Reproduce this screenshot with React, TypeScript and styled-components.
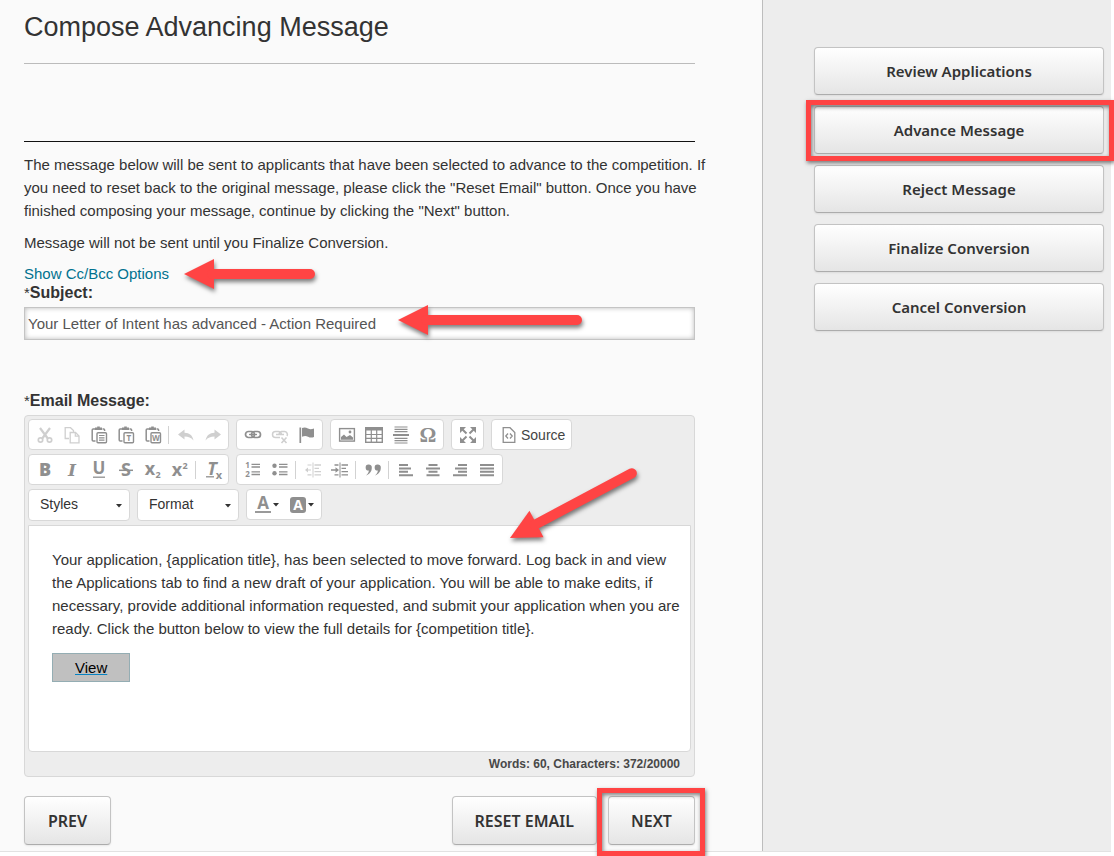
import React from 'react';
import styled, { createGlobalStyle, css } from 'styled-components';

const GlobalStyle = createGlobalStyle`
  * { box-sizing: border-box; }
  body {
    min-height: 100vh;
    margin: 0;
    background: #fff;
    color: #333;
    font-family: "Liberation Sans", Arial, sans-serif;
    font-size: 15px;
    line-height: 23px;
  }
`;

const RED = '#ff4444';

const Page = styled.div`
  display: grid;
  grid-template-columns: minmax(0, 1fr) 349px;
  margin-right: 3px;
  border-bottom: 1px solid #e2e2e2;
`;

const Main = styled.main`
  padding: 9px 67px 6px 24px;
  background: #fafafa;
`;

const Title = styled.h1`
  margin: 0;
  padding: 0 0 18px;
  border-bottom: 1px solid #bbb;
  font-size: 27px;
  font-weight: 400;
  line-height: 36px;
`;

const Intro = styled.section`
  margin-top: 77px;
  padding-top: 11px;
  border-top: 1px solid #111;
`;

const Text = styled.p`
  margin: 0 -16px 9px 0;
`;

const LinkRow = styled.div`
  position: relative;
  margin-top: 10px;
  line-height: 19px;
`;

const OptionsLink = styled.a`
  color: #00728f;
  text-decoration: none;
`;

const Label = styled.label`
  display: block;
  font-size: 16px;
  font-weight: 700;
  line-height: 19px;
`;

const Required = styled.span`
  font-size: 15px;
  font-weight: 400;
`;

const InputWrap = styled.div`
  position: relative;
  margin: 5px 0 51px;
`;

const SubjectInput = styled.input`
  display: block;
  width: 100%;
  height: 33px;
  padding: 0 3px;
  border: 1px solid #c4c4c4;
  border-radius: 0;
  background: #fff;
  box-shadow: inset 0 0 5px rgba(0, 0, 0, 0.28);
  color: #555;
  font: inherit;
`;

const Editor = styled.div`
  position: relative;
  margin-top: 5px;
  padding: 3px 3px 0;
  border: 1px solid #d8d8d8;
  border-radius: 4px;
  background: #ededed;
`;

const Toolbar = styled.div`
  display: flex;
  flex-direction: column;
  gap: 4px;
  margin-bottom: 4px;
`;

const ToolRow = styled.div`
  display: flex;
  gap: 7px;
`;

const Group = styled.div`
  display: flex;
  align-items: center;
  height: 31px;
  padding: 0 2px;
  border: 1px solid #d8d8d8;
  border-radius: 4px;
  background: #fff;
`;

const ToolButton = styled.button<{ $wide?: boolean }>`
  display: flex;
  align-items: center;
  justify-content: center;
  gap: 3px;
  width: ${(p) => (p.$wide ? 'auto' : '27px')};
  height: 27px;
  padding: ${(p) => (p.$wide ? '0 4px 0 6px' : '0')};
  border: 0;
  background: none;
  color: ${(p) => (p.$wide ? '#444' : '#8f8f8f')};
  font: 14px "Liberation Sans", Arial, sans-serif;
  &:disabled { color: #cfcfcf; }
  svg { color: ${(p) => (p.$wide ? '#8f8f8f' : 'inherit')}; }
`;

const ColorButton = styled(ToolButton)`
  gap: 1px;
  width: 35px;
`;

const IconSvg = styled.svg`
  flex: none;
  overflow: visible;
`;

const Separator = styled.span`
  width: 1px;
  height: 18px;
  margin: 0 3px 0 2px;
  background: #d2d2d2;
`;

const Combo = styled.span`
  position: relative;
  width: 102px;
  height: 32px;
`;

const ComboSelect = styled.select`
  width: 100%;
  height: 100%;
  padding: 0 24px 2px 11px;
  border: 1px solid #d8d8d8;
  border-radius: 4px;
  appearance: none;
  background: #fff;
  color: #333;
  font: 14px "Liberation Sans", Arial, sans-serif;
`;

const ComboCaret = styled.span`
  position: absolute;
  top: 15px;
  right: 8px;
  display: flex;
  pointer-events: none;
`;

const Body = styled.div`
  min-height: 227px;
  padding: 22px 5px 22px 22px;
  border: 1px solid #d8d8d8;
  border-radius: 0 0 4px 4px;
  background: #fff;
  outline: 0;
`;

const Message = styled.p`
  margin: 0 0 13px 1px;
`;

const ViewLink = styled.a`
  display: inline-block;
  margin-left: 1px;
  padding: 2px 22px;
  border: 1px solid #94adb3;
  background: #c0c0c0;
  color: #000;
  text-decoration: underline 1px #0782c1;
`;

const Counter = styled.div`
  padding-right: 11px;
  color: #484848;
  font-size: 12px;
  font-weight: 700;
  line-height: 24px;
  text-align: right;
`;

const Footer = styled.div`
  display: flex;
  justify-content: space-between;
  margin-top: 19px;
`;

const FooterGroup = styled.div`
  display: flex;
  gap: 11px;
`;

const Anchor = styled.div`
  position: relative;
`;

const Button = styled.button<{ $block?: boolean }>`
  display: block;
  min-width: 87px;
  height: 49px;
  padding: 0 22px;
  border: 1px solid #c3c3c3;
  border-bottom-color: #acacac;
  border-radius: 4px;
  background: linear-gradient(#fff, #e5e5e5);
  box-shadow: 0 1px 2px rgba(0, 0, 0, 0.08);
  color: #333;
  font: 600 16px "Noto Sans", sans-serif;
  white-space: nowrap;
  ${(p) => p.$block && css`
    width: 100%;
    height: 48px;
    font-size: 15px;
  `}
`;

const Sidebar = styled.aside`
  display: flex;
  flex-direction: column;
  gap: 11px;
  padding: 47px 7px 0 51px;
  border-left: 1px solid #bdbdbd;
  background: #ededed;
`;

const Highlight = styled.span<{ $inset: string }>`
  position: absolute;
  z-index: 2;
  inset: ${(p) => p.$inset};
  border: 5px solid ${RED};
  box-shadow: 1px 2px 4px rgba(0, 0, 0, 0.5), inset 1px 2px 4px rgba(0, 0, 0, 0.5);
  pointer-events: none;
`;

const ArrowSvg = styled.svg<{ $left: number; $top: number }>`
  position: absolute;
  z-index: 3;
  left: ${(p) => p.$left}px;
  top: ${(p) => p.$top}px;
  overflow: visible;
  pointer-events: none;
  filter: drop-shadow(1px 3px 2px rgba(0, 0, 0, 0.5));
`;

/* The tip of the arrow is at (left, top); it points left before the turn. */
function Arrow({ left, top, length, turn = 0 }: { left: number; top: number; length: number; turn?: number }) {
  return (
    <ArrowSvg $left={left} $top={top} width="1" height="1" aria-hidden="true">
      <g transform={`rotate(${turn})`} fill={RED}>
        <path d="M0 0 30-15V15Z" />
        <path d={`M28 0H${length - 5}`} stroke={RED} strokeWidth="10" strokeLinecap="round" />
      </g>
    </ArrowSvg>
  );
}

const Caret = () => (
  <svg width="6" height="4" viewBox="0 0 6 4" aria-hidden="true"><path d="M0 0h6L3 3.5z" fill="#333" /></svg>
);

const glyph = (text: string, extra: React.SVGProps<SVGTextElement> = {}) => (
  <text x="9" y="15" textAnchor="middle" fontFamily="Open Sans, sans-serif" fontWeight="700" fontSize="17" fill="currentColor" {...extra}>{text}</text>
);

const line = (d: string, w = 1.6) => <path d={d} fill="none" stroke="currentColor" strokeWidth={w} />;

const clipboard = (
  <>
    <path d="M5.500 3H3.200Q2.200 3 2.200 4V14Q2.200 15 3.200 15H5.500M12.500 3H13.600Q14.600 3 14.600 4V5" fill="none" stroke="currentColor" strokeWidth="1.500" />
    <path d="M5 1.500h2.200V.5h2.600v1H12V4H5z" fill="currentColor" />
    <rect x="7" y="6.800" width="9.500" height="10" rx="1" fill="#fff" stroke="currentColor" strokeWidth="1.400" />
  </>
);

const tiny = (text: string) => glyph(text, { x: 11.8, y: 14.8, fontSize: 8 });

const icons: Record<string, React.ReactNode> = {
  Cut: (
    <>
      {line('M4 2 11.800 12.500M14 2 6.200 12.500', 2.2)}
      <circle cx="4.500" cy="14" r="2.200" fill="none" stroke="currentColor" strokeWidth="1.700" />
      <circle cx="13.500" cy="14" r="2.200" fill="none" stroke="currentColor" strokeWidth="1.700" />
    </>
  ),
  Copy: (
    <>
      {line('M6 12.500H2.200V1.700H7.500L10.500 4.500V6', 1.3)}
      <path d="M7.200 6.500H12.500L16 10V16.800H7.200Z" fill="#fff" stroke="currentColor" strokeWidth="1.300" />
      {line('M12.300 6.500V10.200H16', 1.2)}
    </>
  ),
  Paste: <>{clipboard}{line('M9 9.500h5.500M9 11.800h5.500M9 14.100h5.500', 1.2)}</>,
  'Paste as plain text': <>{clipboard}{tiny('T')}</>,
  'Paste from Word': <>{clipboard}{tiny('W')}</>,
  Undo: <path d="M1 8.500 7.500 3.500V6.800C12.500 7 15.500 9.500 16.500 14.500 14 11.500 11.500 10.500 7.500 10.500V13.500Z" fill="currentColor" />,
  Redo: <path d="M17 8.500 10.500 3.500V6.800C5.500 7 2.500 9.500 1.500 14.500 4 11.500 6.500 10.500 10.500 10.500V13.500Z" fill="currentColor" />,
  Link: (
    <>
      <rect x="1.500" y="5.500" width="9" height="6" rx="3" fill="none" stroke="currentColor" strokeWidth="1.700" />
      <rect x="7.500" y="5.500" width="9" height="6" rx="3" fill="none" stroke="currentColor" strokeWidth="1.700" />
      {line('M5 8.500h8', 1.3)}
    </>
  ),
  Unlink: (
    <>
      {line('M9 11.500H4.500A3 3 0 0 1 4.500 5.500H7.500A3 3 0 0 1 10.400 8M8 8A3 3 0 0 1 10.500 5.500H13.500A3 3 0 0 1 16 10M5 8.500h8', 1.5)}
      {line('M10.500 11.500 15.500 17M15.500 11.500 10.500 17', 1.6)}
    </>
  ),
  Anchor: (
    <>
      {line('M2.300 1.500V17', 1.7)}
      <path d="M4 2C6.500 1 8 1.500 10 2.600S13.500 3.500 16 2.500V11C13.500 12 12 11.700 10 10.700S6.500 9.700 4 10.800Z" fill="currentColor" />
    </>
  ),
  Image: (
    <>
      <rect x="1.600" y="2.600" width="14.800" height="12.500" fill="none" stroke="currentColor" strokeWidth="1.400" />
      <path d="M3 13.700V11L6 8.500 8.500 11 12 9 15 11.500V13.700Z" fill="currentColor" />
      <circle cx="12" cy="6" r="1.400" fill="currentColor" />
    </>
  ),
  Table: (
    <>
      <rect x="0.700" y="1.700" width="16.600" height="14.600" fill="none" stroke="currentColor" strokeWidth="1.400" />
      <path d="M0 1h18v3.500H0z" fill="currentColor" />
      {line('M0 8.500h18M0 12.300h18M6.300 4V16M11.700 4V16', 1.2)}
    </>
  ),
  'Horizontal line': <>{line('M2.500 1h13M2.500 3.300h13M2.500 5.600h13M2.500 12.400h13M2.500 14.700h13M2.500 17h13', 1.2)}{line('M1 9h16', 2)}</>,
  'Special character': glyph('Ω', { y: 16, fontSize: 21, fontFamily: 'Liberation Serif, serif' }),
  Maximize: (
    <>
      <path d="M1 1h6L1 7zM17 1v6l-6-6zM1 17v-6l6 6zM17 17h-6l6-6z" fill="currentColor" />
      {line('M3 3 7.500 7.500M15 3 10.500 7.500M3 15 7.500 10.500M15 15 10.500 10.500', 2)}
    </>
  ),
  Bold: glyph('B', { fontSize: 18, fontWeight: 800 }),
  Italic: glyph('I', { fontFamily: 'DejaVu Serif, serif', fontStyle: 'italic', fontSize: 17 }),
  Underline: <>{glyph('U', { y: 13, fontSize: 17 })}{line('M3 16.200h12', 1.3)}</>,
  Strikethrough: <>{glyph('S', { fontSize: 18 })}{line('M2 9.300h14', 1.5)}</>,
  Subscript: <>{glyph('x', { x: 6, y: 14, fontSize: 18 })}{glyph('2', { x: 14, y: 17, fontSize: 9 })}</>,
  Superscript: <>{glyph('x', { x: 6, y: 15, fontSize: 18 })}{glyph('2', { x: 14, y: 8, fontSize: 9 })}</>,
  'Remove format': <>{glyph('T', { x: 8, y: 14, fontStyle: 'italic', fontSize: 18 })}{line('M2 15.800h8', 1.3)}{glyph('x', { x: 15, y: 17.5, fontSize: 11 })}</>,
  'Numbered list': <>{glyph('1', { x: 3.5, y: 7, fontSize: 8 })}{glyph('2', { x: 3.5, y: 16, fontSize: 8 })}{line('M7.500 3.300h8.500M7.500 6h8.500M7.500 10.800h8.500M7.500 13.500h8.500', 1.3)}</>,
  'Bulleted list': (
    <>
      <circle cx="3.500" cy="4.700" r="2.200" fill="currentColor" /><circle cx="3.500" cy="12.200" r="2.200" fill="currentColor" />
      {line('M8 3.300h8.500M8 6h8.500M8 10.800h8.500M8 13.500h8.500', 1.3)}
    </>
  ),
  Outdent: <>{line('M9 1.500V16.500', 1)}{line('M10.500 4h6.500M10.500 7.300h4.500M10.500 10.600h6.500M10.500 13.900h6.500', 1.3)}{line('M3 9h4M3.500 4h4M3.500 13.900h4', 1.1)}<path d="M1 9l3-2.500v5z" fill="currentColor" /></>,
  Indent: <>{line('M9 1.500V16.500', 1)}{line('M10.500 4h6.500M10.500 7.300h4.500M10.500 10.600h6.500M10.500 13.900h6.500', 1.3)}{line('M0 9h5M3.500 4h4M3.500 13.900h4', 1.3)}<path d="M8 9l-3.500-2.800v5.600z" fill="currentColor" /></>,
  'Block quote': (
    <path d="M4.500 3.500A3 3 0 0 1 7.800 6.800C7.800 10.500 5.500 13.500 2 14.500 4 12.500 4.800 11.500 4.800 9.500A3 3 0 0 1 4.500 3.500ZM13.500 3.500A3 3 0 0 1 16.800 6.800C16.800 10.500 14.500 13.500 11 14.500 13 12.500 13.800 11.500 13.800 9.500A3 3 0 0 1 13.500 3.500Z" fill="currentColor" />
  ),
  'Align left': line('M2 4h9M2 7.400h12M2 10.800h9M2 14.200h14', 2),
  Center: line('M4.500 4h9M2 7.400h14M4.500 10.800h9M2.500 14.200h13', 2),
  'Align right': line('M7 4h9M4 7.400h12M7 10.800h9M2 14.200h14', 2),
  Justify: line('M2 4h14M2 7.400h14M2 10.800h14M2 14.200h14', 2),
  Source: (
    <>
      <path d="M3.200 1.700H10L14.800 6.500V16.300H3.200Z" fill="none" stroke="currentColor" strokeWidth="1.300" />
      {line('M8 7.500 5.800 10 8 12.500M10 7.500 12.200 10 10 12.500', 1.3)}
    </>
  ),
  'Text color': <>{glyph('A', { y: 12.5, fontSize: 17 })}{line('M1 16h16', 1.8)}</>,
  'Background color': (
    <>
      <rect x="1" y="1" width="16" height="16" rx="3" fill="currentColor" />
      {glyph('A', { y: 14, fontSize: 14, fill: '#fff' })}
    </>
  ),
};

const Icon = ({ name }: { name: string }) => (
  <IconSvg width="18" height="18" viewBox="0 0 18 18" aria-hidden="true">{icons[name]}</IconSvg>
);

/* A "|" in a list stands for a separator; a leading "-" marks a disabled tool. */
function ToolGroup({ tools }: { tools: string[] }) {
  return (
    <Group>
      {tools.map((tool, i) => {
        if (tool === '|') return <Separator key={i} />;
        const disabled = tool.startsWith('-');
        const name = disabled ? tool.slice(1) : tool;
        return (
          <ToolButton key={i} type="button" disabled={disabled} aria-label={name}>
            <Icon name={name} />
          </ToolButton>
        );
      })}
    </Group>
  );
}

function ToolCombo({ name }: { name: string }) {
  return (
    <Combo>
      <ComboSelect aria-label={name}><option>{name}</option></ComboSelect>
      <ComboCaret><Caret /></ComboCaret>
    </Combo>
  );
}

const message =
  'Your application, {application title}, has been selected to move forward. Log back in and view ' +
  'the Applications tab to find a new draft of your application. You will be able to make edits, if ' +
  'necessary, provide additional information requested, and submit your application when you are ' +
  'ready. Click the button below to view the full details for {competition title}.';

const steps = ['Review Applications', 'Advance Message', 'Reject Message', 'Finalize Conversion', 'Cancel Conversion'];

export default function App() {
  return (
    <>
      <GlobalStyle />
      <Page>
        <Main>
          <Title>Compose Advancing Message</Title>
          <Intro>
            <Text>
              The message below will be sent to applicants that have been selected to advance to the competition. If
              you need to reset back to the original message, please click the "Reset Email" button. Once you have
              finished composing your message, continue by clicking the "Next" button.
            </Text>
            <Text>Message will not be sent until you Finalize Conversion.</Text>
          </Intro>
          <LinkRow>
            <OptionsLink href="#cc">Show Cc/Bcc Options</OptionsLink>
            <Arrow left={160} top={10} length={131} />
          </LinkRow>
          <Label htmlFor="subject"><Required>*</Required>Subject:</Label>
          <InputWrap>
            <SubjectInput id="subject" defaultValue="Your Letter of Intent has advanced - Action Required" />
            <Arrow left={374} top={13} length={184} />
          </InputWrap>
          <Label id="message-label" as="div"><Required>*</Required>Email Message:</Label>
          <Editor>
            <Toolbar>
              <ToolRow>
                <ToolGroup tools={['-Cut', '-Copy', 'Paste', 'Paste as plain text', 'Paste from Word', '|', '-Undo', '-Redo']} />
                <ToolGroup tools={['Link', '-Unlink', 'Anchor']} />
                <ToolGroup tools={['Image', 'Table', 'Horizontal line', 'Special character']} />
                <ToolGroup tools={['Maximize']} />
                <Group>
                  <ToolButton type="button" $wide><Icon name="Source" />Source</ToolButton>
                </Group>
              </ToolRow>
              <ToolRow>
                <ToolGroup tools={['Bold', 'Italic', 'Underline', 'Strikethrough', 'Subscript', 'Superscript', '|', 'Remove format']} />
                <ToolGroup tools={['Numbered list', 'Bulleted list', '|', '-Outdent', 'Indent', '|', 'Block quote', '|', 'Align left', 'Center', 'Align right', 'Justify']} />
              </ToolRow>
              <ToolRow>
                <ToolCombo name="Styles" />
                <ToolCombo name="Format" />
                <Group>
                  <ColorButton type="button" aria-label="Text color"><Icon name="Text color" /><Caret /></ColorButton>
                  <ColorButton type="button" aria-label="Background color"><Icon name="Background color" /><Caret /></ColorButton>
                </Group>
              </ToolRow>
            </Toolbar>
            <Body role="textbox" aria-multiline="true" aria-labelledby="message-label" contentEditable suppressContentEditableWarning>
              <Message>{message}</Message>
              <ViewLink href="#view">View</ViewLink>
            </Body>
            <Counter>Words: 60, Characters: 372/20000</Counter>
            <Arrow left={485} top={122} length={143} turn={-28} />
          </Editor>
          <Footer>
            <Button type="button">PREV</Button>
            <FooterGroup>
              <Button type="button">RESET EMAIL</Button>
              <Anchor>
                <Button type="button">NEXT</Button>
                <Highlight $inset="-8px -10px -11px -11px" />
              </Anchor>
            </FooterGroup>
          </Footer>
        </Main>
        <Sidebar>
          {steps.map((step) => (
            <Anchor key={step}>
              <Button type="button" $block>{step}</Button>
              {step === 'Advance Message' && <Highlight $inset="-6px -10px -7px -8px" />}
            </Anchor>
          ))}
        </Sidebar>
      </Page>
    </>
  );
}
